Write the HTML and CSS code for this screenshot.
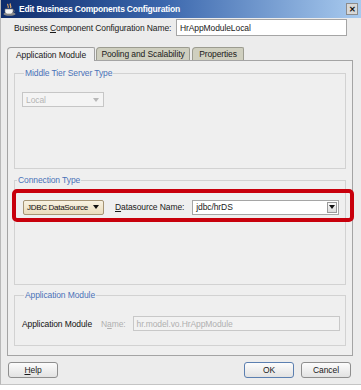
FILE: index.html
```html
<!DOCTYPE html>
<html lang="en">
<head>
    <meta charset="UTF-8">
    <meta name="viewport" content="width=device-width, initial-scale=1.0">
    <title>Edit Business Components Configuration</title>
    <link rel="stylesheet" href="styles.css">
</head>
<body>
    <div class="dialog">
        <div class="titlebar">
            <svg class="app-icon" width="13" height="13" viewBox="0 0 13 13">
                <path d="M5 1 C3.5 2.5 6.5 3 5 5" stroke="#d9a060" stroke-width="1.2" fill="none"/>
                <path d="M7.5 0.5 C6 2 9 3 7.5 5" stroke="#e8b070" stroke-width="1.2" fill="none"/>
                <ellipse cx="6.5" cy="11" rx="6" ry="1.8" fill="#8a8a8a"/>
                <path d="M2 6 H10 V8.5 C10 10.5 8.5 11 6 11 C3.5 11 2 10.5 2 8.5 Z" fill="#f4f4f4" stroke="#777" stroke-width="0.6"/>
                <path d="M10 7 C12 7 12 9.5 9.6 9.5" stroke="#777" stroke-width="0.8" fill="none"/>
            </svg>
            <span class="title">Edit Business Components Configuration</span>
            <span class="close">&#x2715;</span>
        </div>
        <div class="content">
            <div class="name-row">
                <span class="label">Business <u>C</u>omponent Configuration Name:</span>
                <div class="textbox name-box">HrAppModuleLocal</div>
            </div>

            <div class="tabs">
                <span class="tab tab-active">Application Module</span>
                <span class="tab tab-pooling">Pooling and Scalability</span>
                <span class="tab tab-props">Properties</span>
            </div>

            <div class="panel">
                <fieldset class="group group-server">
                    <legend>Middle Tier Server Type</legend>
                    <div class="combo combo-disabled">
                        <span>Local</span>
                        <span class="arrow arrow-light"></span>
                    </div>
                </fieldset>

                <fieldset class="group group-conn">
                    <legend>Connection Type</legend>
                    <div class="highlight">
                        <div class="combo combo-jdbc">
                            <span>JDBC DataSource</span>
                            <span class="arrow"></span>
                        </div>
                        <span class="label ds-label"><u>D</u>atasource Name:</span>
                        <div class="textbox ds-box">
                            <span>jdbc/hrDS</span>
                            <span class="drop-btn"><span class="arrow"></span></span>
                        </div>
                    </div>
                </fieldset>

                <fieldset class="group group-am">
                    <legend>Application Module</legend>
                    <div class="am-row">
                        <span class="label am-label">Application Module</span>
                        <span class="label label-disabled">N<u>a</u>me:</span>
                        <div class="textbox textbox-disabled am-box">hr.model.vo.HrAppModule</div>
                    </div>
                </fieldset>
            </div>

            <div class="buttons">
                <span class="btn"><u>H</u>elp</span>
                <span class="spacer"></span>
                <span class="btn btn-default">OK</span>
                <span class="btn">Cancel</span>
            </div>
        </div>
    </div>
</body>
</html>
```

FILE: styles.css
```css
* {
    box-sizing: border-box;
}
body {
    margin: 0;
    background-color: #fff;
    font-family: "Liberation Sans", Arial, sans-serif;
    font-size: 8.5px;
    letter-spacing: -0.1px;
    color: #1a1a1a;
    white-space: nowrap;
}
.dialog {
    width: 361px;
    height: 385px;
    background-color: #ececec;
    border-left: 1px solid #b8b8b8;
    border-bottom: 1px solid #c4c4c4;
}
.titlebar {
    height: 18px;
    display: flex;
    align-items: center;
    padding: 0 3px 0 2px;
    background: linear-gradient(to right, #0e2c6c, #3b67ad 45%, #a9cbef);
    color: #fff;
}
.app-icon {
    margin-right: 3px;
}
.title {
    font-weight: bold;
    font-size: 8.5px;
    letter-spacing: -0.2px;
}
.close {
    margin-left: auto;
    width: 12px;
    height: 12px;
    display: flex;
    align-items: center;
    justify-content: center;
    background-color: #d8d8d8;
    border: 1px solid #8c8c8c;
    color: #111;
    font-size: 8px;
    font-weight: bold;
}
.content {
    padding: 0 8px 0 6px;
}
.name-row {
    display: flex;
    align-items: center;
    margin-top: 1px;
    padding-left: 7px;
}
.textbox {
    height: 17px;
    display: flex;
    align-items: center;
    padding-left: 3px;
    background-color: #fff;
    border: 1px solid #a5a5a5;
}
.name-box {
    margin-left: auto;
    margin-right: 6px;
    width: 171px;
}
.tabs {
    display: flex;
    margin-top: 11px;
    height: 13px;
    align-items: flex-end;
}
.tab {
    height: 13px;
    display: flex;
    align-items: center;
    justify-content: center;
    background-color: #cfcfbf;
    border: 1px solid #9c9c90;
    border-bottom: none;
    border-radius: 4px 2px 0 0;
    margin-right: 1px;
}
.tab-active {
    width: 88px;
    height: 14px;
    background-color: #efefef;
    border-color: #a0a0a0;
    position: relative;
    top: 1px;
}
.tab-pooling {
    width: 94px;
}
.tab-props {
    width: 52px;
    margin-left: 1px;
}
.panel {
    height: 296px;
    background-color: #efefef;
    border: 1px solid #a4a4a4;
    padding: 6px 6px 0 6px;
}
.group {
    margin: 0;
    padding: 0 0 0 7px;
    min-width: 0;
    border: 1px solid #d2d2d2;
}
.group legend {
    margin-left: 2px;
    padding: 0 1px;
    line-height: 12px;
    color: #4a72b8;
}
.group-server {
    height: 102px;
    padding-top: 13px;
}
.group-conn {
    height: 111px;
    margin-top: 5px;
    padding: 3px 0 0 0;
}
.group-am {
    height: 57px;
    margin-top: 4px;
    padding-top: 15px;
    padding-right: 5px;
}
.combo {
    width: 82px;
    height: 15px;
    flex-shrink: 0;
    display: flex;
    align-items: center;
    justify-content: space-between;
    padding: 0 4px 0 3px;
    border: 1px solid #a8a8a8;
    background-color: #f4f4f4;
}
.combo-disabled {
    color: #b4b4b4;
    border-color: #c6c6c6;
}
.combo-jdbc {
    width: 81px;
    padding: 0 4px 0 3px;
    font-size: 8px;
    letter-spacing: -0.3px;
    background: linear-gradient(#f8f2e2, #eadcbc);
    border-color: #a59474;
    border-radius: 2px;
    color: #111;
}
.arrow {
    width: 0;
    height: 0;
    border-left: 3.5px solid transparent;
    border-right: 3.5px solid transparent;
    border-top: 4px solid #111;
}
.arrow-light {
    border-top-color: #b8b8b8;
}
.highlight {
    display: flex;
    align-items: center;
    height: 33px;
    margin: 0 -9px 0 -3px;
    padding: 3px 11px 0 7px;
    border: 4px solid #c8000c;
    border-radius: 5px;
}
.ds-label {
    margin-left: 11px;
}
.ds-box {
    flex: 1;
    height: 15px;
    margin-left: 8px;
    justify-content: space-between;
    padding-right: 1px;
}
.drop-btn {
    width: 10px;
    height: 11px;
    display: flex;
    align-items: center;
    justify-content: center;
    background: linear-gradient(#fafafa, #dcdcdc);
    border: 1px solid #9a9a9a;
}
.am-row {
    display: flex;
    align-items: center;
}
.am-label {
    color: #111;
}
.label-disabled {
    margin-left: 9px;
    color: #b0b0b0;
}
.textbox-disabled {
    color: #b0b0b0;
    border-color: #c8c8c8;
    background-color: #f2f2f2;
}
.am-box {
    flex: 1;
    height: 15px;
    margin-left: 7px;
}
.buttons {
    display: flex;
    padding-top: 6px;
    padding-right: 2px;
    padding-left: 1px;
}
.spacer {
    flex: 1;
}
.btn {
    width: 50px;
    height: 16px;
    display: flex;
    align-items: center;
    justify-content: center;
    background: linear-gradient(#fcfcfc, #e2e2e2);
    border: 1px solid #8e8e8e;
    border-radius: 3px;
    margin-left: 7px;
}
.btn:first-child {
    margin-left: 0;
}
.btn-default {
    border-color: #5b7fb0;
}
```
